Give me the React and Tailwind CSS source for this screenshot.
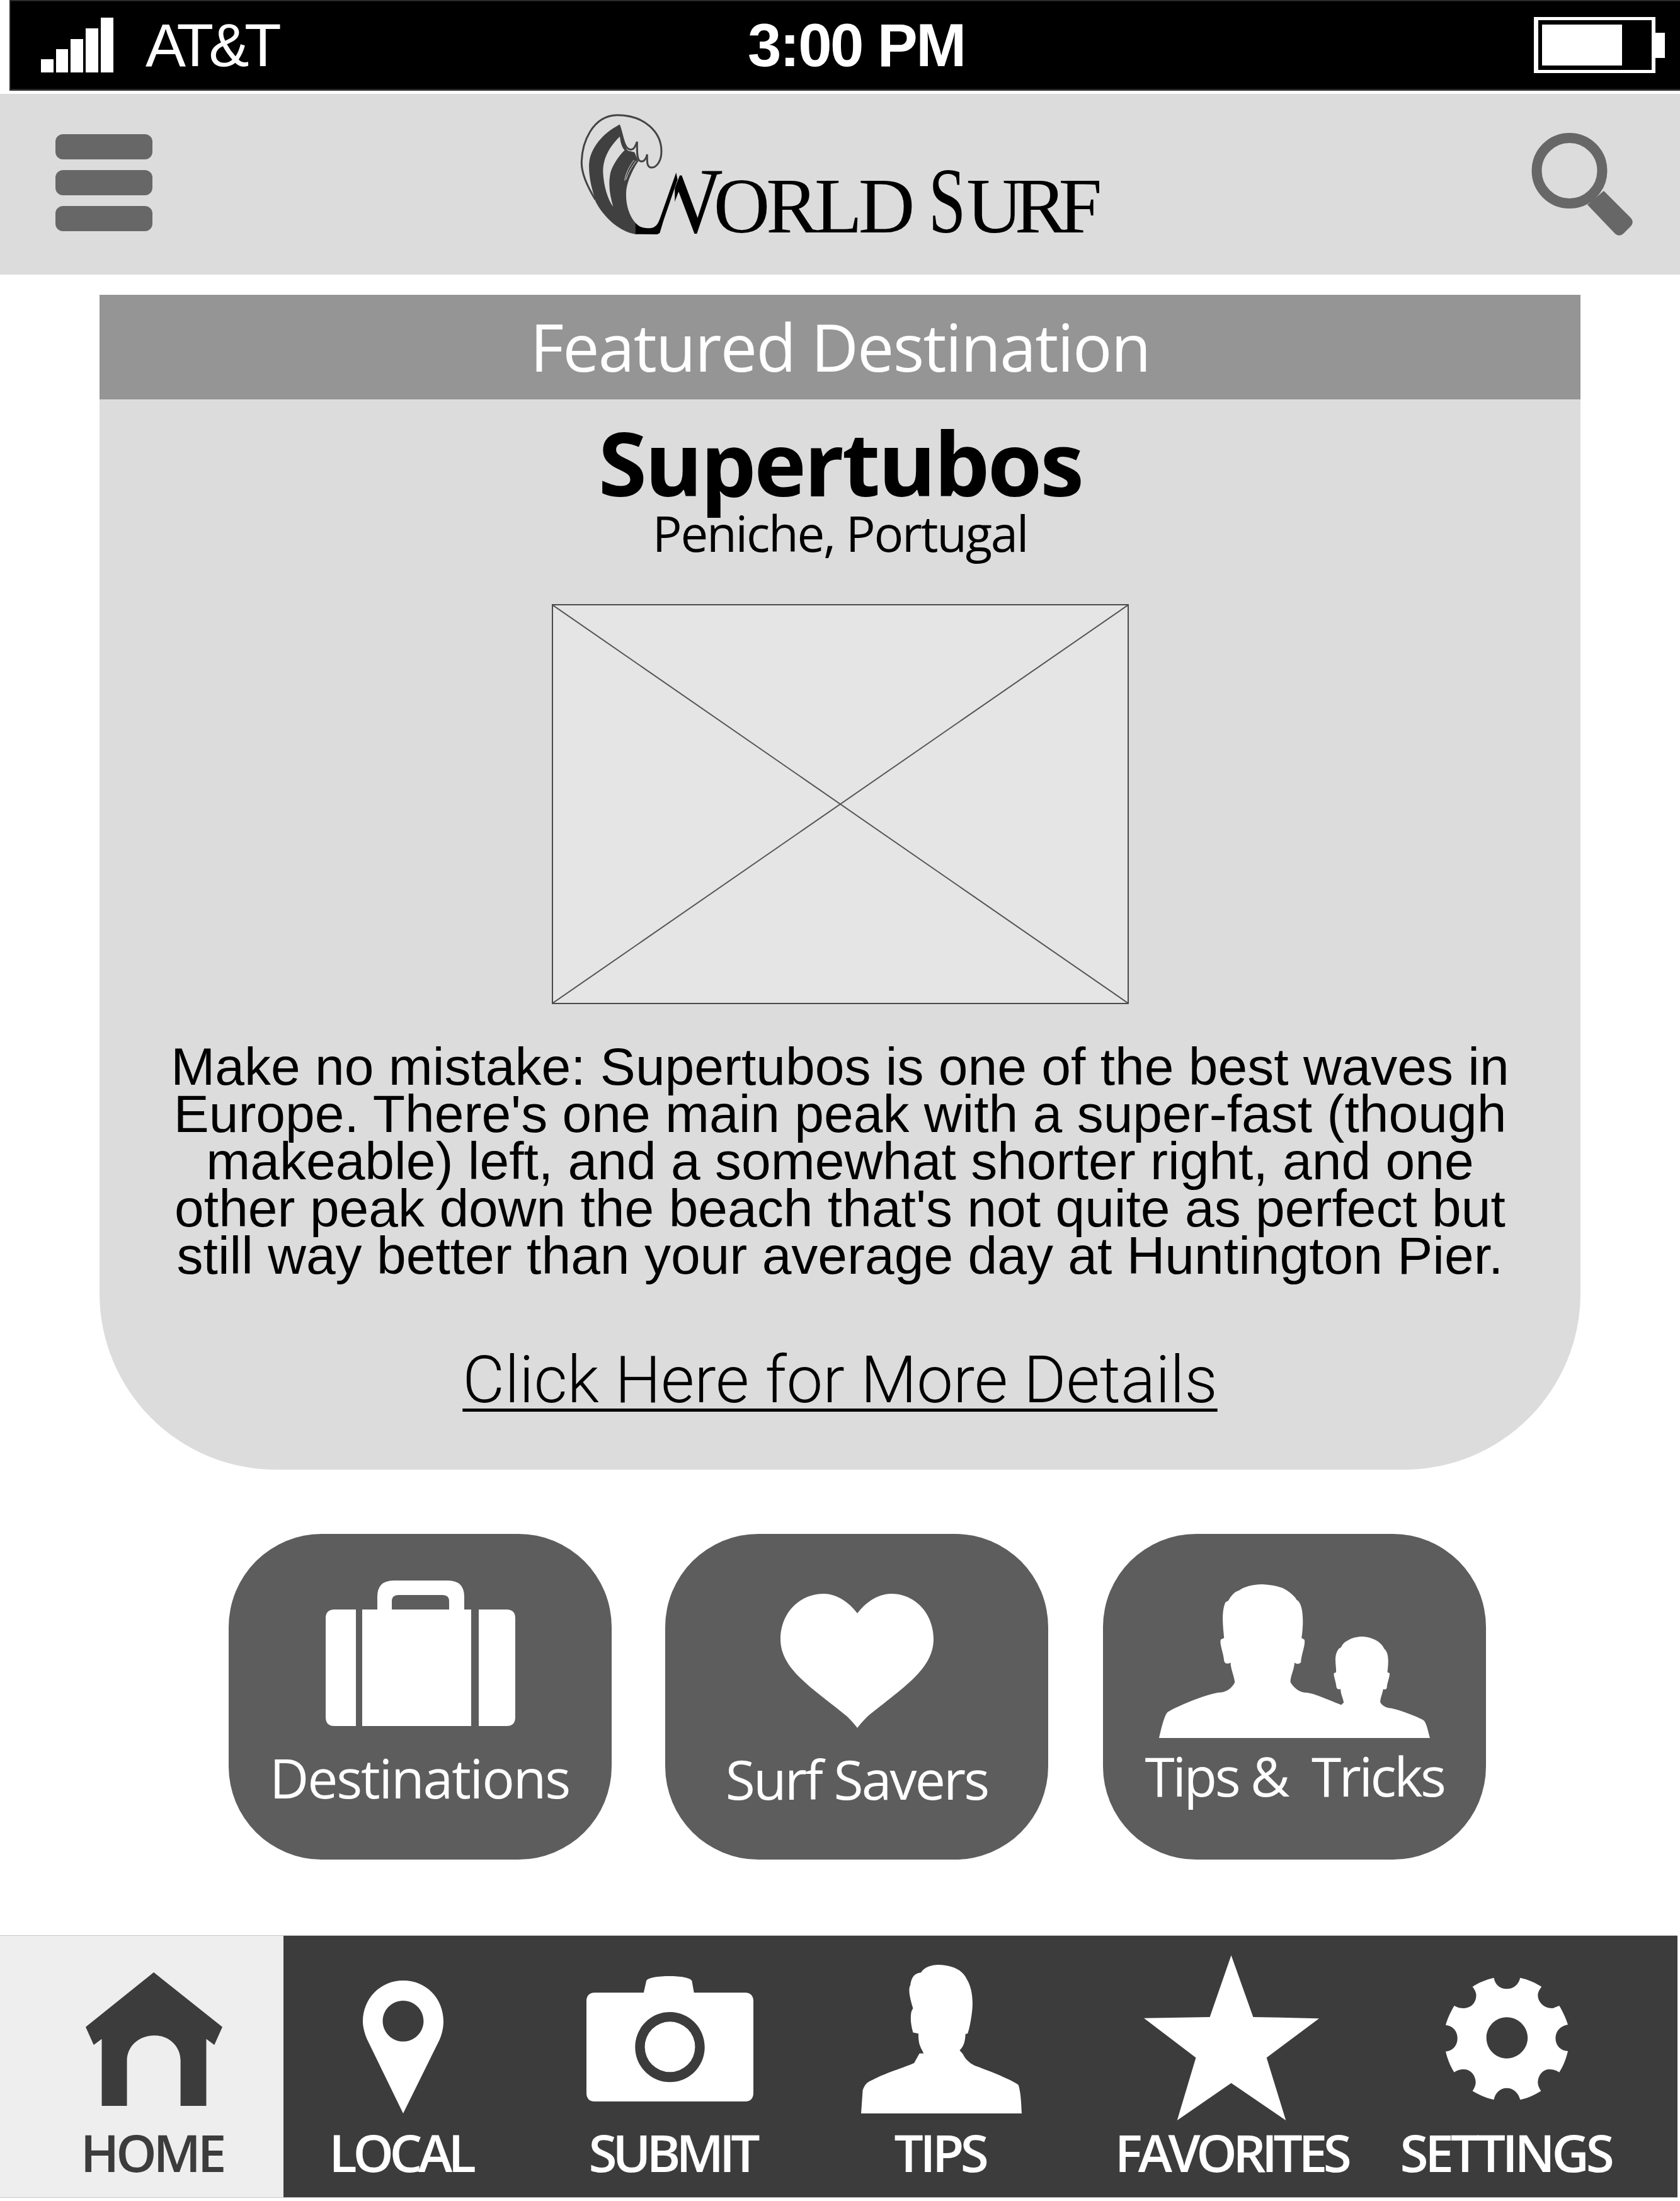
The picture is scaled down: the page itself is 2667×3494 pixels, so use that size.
import React from "react";

const myriad = "font-['Open_Sans',sans-serif]";
const helv = "font-['Liberation_Sans',Arial,sans-serif]";

function Signal() {
  return (
    <svg viewBox="65 28 115 87" className="w-[115px] h-[87px]" fill="#fff">
      <rect x="65" y="94" width="20" height="21" />
      <rect x="89" y="78" width="19" height="37" />
      <rect x="112" y="62" width="20" height="53" />
      <rect x="136" y="45" width="20" height="70" />
      <rect x="160" y="28" width="20" height="87" />
    </svg>
  );
}

function Battery() {
  return (
    <svg viewBox="2435 27 208 89" className="w-[208px] h-[89px]">
      <path fill="#fff" fillRule="evenodd" d="M2435 27H2628V116H2435ZM2442 32V111H2622V32Z" />
      <rect x="2448" y="39" width="127" height="65" fill="#fff" />
      <rect x="2628" y="52" width="15" height="40" fill="#fff" />
    </svg>
  );
}

function Search() {
  return (
    <svg viewBox="2431 211 162 164" className="w-[162px] h-[164px] mt-[62px] ml-[681px]">
      <ellipse cx="2491.5" cy="271" rx="52" ry="52" fill="none" stroke="#676767" strokeWidth="16" />
      <path fill="#676767" d="M2520 325L2546 303L2588 345Q2595 352 2589 359L2577 371Q2570 377 2563 370Z" />
    </svg>
  );
}

function Wave() {
  return (
    <svg viewBox="0 0 540 630" className="w-[180px] h-[210px] shrink-0">
      <path
        fill="none"
        stroke="#444"
        strokeWidth="9"
        d="M105,440 C62,370 38,310 40,260 C42,170 90,40 210,38 C340,38 420,120 420,210 C420,260 395,290 370,288 C350,285 352,260 352,225 C345,255 330,265 315,255 C300,240 305,190 304,165 C295,190 285,210 265,200 C240,190 235,130 218,85"
      />
      <path
        fill="#404040"
        d="M218,85 C130,130 75,210 75,280 C75,340 90,400 108,445 L95,425 C130,510 210,590 295,605 L295,550 C265,515 250,460 252,410 C252,370 275,310 310,258 L292,215 L262,208 C240,190 235,130 218,85 Z"
      />
      <path
        fill="#dcdcdc"
        d="M222,140 C170,190 140,250 142,310 C145,380 165,440 190,475 C175,420 165,370 178,310 C190,270 220,230 245,205 C230,190 225,165 222,140 Z"
      />
      <path fill="none" stroke="#dcdcdc" strokeWidth="3" d="M290,252 C268,280 250,315 245,350" />
      <path fill="none" stroke="#dcdcdc" strokeWidth="3" d="M300,256 C278,285 260,315 252,345" />
      <path
        fill="#000"
        d="M295,550 C315,575 345,580 375,575 C395,570 405,555 415,525 L490,312 L497,345 L430,540 L412,600 L400,606 L295,605 Z"
      />
    </svg>
  );
}

function Logo() {
  return (
    <div className="flex items-end w-[840px] h-[210px] mt-[21px] ml-[668px]">
      <Wave />
      <div className="flex items-baseline -ml-[83px] -mb-[22px] font-['Liberation_Serif',serif] text-black leading-[148px] text-[124px] whitespace-nowrap">
        <span className="text-[148px] [clip-path:inset(0_0_0_46%)] -mr-[14px]">W</span>
        <span className="tracking-[-6px]">ORLD</span>
        <span className="text-[148px] ml-[28px] w-[60px] scale-x-[0.72] origin-left">S</span>
        <span className="tracking-[-13px]">URF</span>
      </div>
    </div>
  );
}

function StatusBar() {
  return (
    <div className="ml-[15px] h-[144px] bg-black border-t-[2px] border-b-[3px] border-l-[2px] border-[#2b2829] flex items-center text-white">
      <div className={`w-[1170px] pl-[48px] flex items-center ${helv}`}>
        <Signal />
        <span className="ml-[51px] text-[96px] tracking-[-7.5px] leading-none">AT&amp;T</span>
      </div>
      <div className={`w-[1248px] text-[96px] font-bold tracking-[-2.6px] leading-none whitespace-nowrap ${helv}`}>3:00 PM</div>
      <Battery />
    </div>
  );
}

function Header() {
  return (
    <div className="mt-[5px] h-[287px] bg-[#dcdcdc] flex items-start pl-[88px]">
      <div className="w-[154px] mt-[64px] flex flex-col gap-[17px]">
        <div className="h-[40px] rounded-[12px] bg-[#676767]" />
        <div className="h-[40px] rounded-[12px] bg-[#676767]" />
        <div className="h-[40px] rounded-[12px] bg-[#676767]" />
      </div>
      <Logo />
      <Search />
    </div>
  );
}

function FeaturedCard() {
  return (
    <div className="mt-[32px] ml-[158px] w-[2351px] h-[1865px] bg-[#dcdcdc] rounded-b-[280px] flex flex-col items-center text-black">
      <div className={`self-stretch h-[166px] bg-[#959595] flex items-center justify-center text-white text-[104px] tracking-[-1.8px] pb-[3px] ${myriad}`}>
        Featured Destination
      </div>
      <div className={`mt-[30px] text-[140px] leading-[140px] font-bold tracking-[-3.4px] ${myriad}`}>Supertubos</div>
      <div className={`-mt-[3px] text-[78px] leading-[90px] tracking-[-2.3px] ${myriad}`}>Peniche, Portugal</div>
      <div className="mt-[68px] w-[916px] h-[635px] bg-[#e5e5e5] border-2 border-[#4a4a4a]">
        <svg viewBox="0 0 912 631" preserveAspectRatio="none" className="w-full h-full">
          <line x1="0" y1="0" x2="912" y2="631" stroke="#555" strokeWidth="2" />
          <line x1="912" y1="0" x2="0" y2="631" stroke="#555" strokeWidth="2" />
        </svg>
      </div>
      <p className={`mt-[62px] text-center text-[84px] leading-[75px] whitespace-nowrap ${helv}`}>
        Make no mistake: Supertubos is one of the best waves in
        <br />
        Europe. There's one main peak with a super-fast (though
        <br />
        makeable) left, and a somewhat shorter right, and one
        <br />
        other peak down the beach that's not quite as perfect but
        <br />
        still way better than your average day at Huntington Pier.
      </p>
      <div className="mt-[100px] text-[103px] leading-[120px] font-light font-['Roboto',sans-serif] underline decoration-[5px] underline-offset-[10px] whitespace-nowrap">
        Click Here for More Details
      </div>
    </div>
  );
}

function Suitcase() {
  return (
    <svg viewBox="516 2509 301 231" className="mt-[74px] w-[301px] h-[231px]" fill="#fff">
      <path d="M530 2555H564V2740H530Q516 2740 516 2726V2569Q516 2555 530 2555Z" />
      <path d="M759 2555H803Q817 2555 817 2569V2726Q817 2740 803 2740H759Z" />
      <path fillRule="evenodd" d="M574 2555H598V2535Q598 2509 624 2509H710Q736 2509 736 2535V2555H747V2740H574ZM621 2555H712V2542Q712 2532 702 2532H631Q621 2532 621 2542Z" />
    </svg>
  );
}

function Heart() {
  return (
    <svg viewBox="1239 2530 243 213" className="mt-[95px] w-[243px] h-[213px]" fill="#fff">
      <path d="M1361,2561 C1345,2540 1325,2530 1308,2530 C1268,2530 1239,2562 1239,2602 C1239,2650 1290,2680 1345,2725 Q1355,2735 1361,2743 Q1367,2735 1377,2725 C1432,2680 1482,2650 1482,2602 C1482,2562 1453,2530 1415,2530 C1397,2530 1377,2540 1361,2561Z" />
    </svg>
  );
}

function Persons() {
  return (
    <svg viewBox="316 265 962 682" preserveAspectRatio="none" className="mt-[80px] w-[430px] h-[244px]" fill="#fff">
      <path d="M316,947 C325,900 335,845 347,832 C380,805 490,750 530,745 C555,745 575,725 585,700 C585,680 570,640 570,612 C560,620 550,618 547,605 C545,570 530,530 535,510 L547,503 C545,470 535,390 552,345 L562,338 C570,320 580,300 600,292 C620,275 650,265 683,265 C720,268 750,275 770,292 C785,305 800,320 805,335 C830,350 830,440 822,503 L832,510 C838,530 820,580 820,610 C815,620 805,620 797,612 C797,640 780,680 783,700 C795,725 815,745 840,746 C870,750 930,785 963,800 L972,790 C970,770 960,750 961,730 C955,733 948,730 946,722 C945,700 935,670 937,660 L945,655 C945,620 935,580 955,550 L962,545 C968,530 975,520 985,515 C1000,503 1020,497 1037,497 C1060,498 1080,507 1095,520 C1105,530 1112,540 1115,550 C1135,570 1130,620 1127,655 L1135,660 C1135,680 1125,705 1125,725 C1122,733 1115,733 1112,730 C1110,750 1100,775 1102,790 C1110,805 1125,815 1140,815 C1165,820 1240,855 1257,870 C1267,885 1272,920 1278,947 Z" />
    </svg>
  );
}

function ActionButton({ icon, label, labelClass, className = "" }) {
  return (
    <div className={`w-[608px] h-[517px] bg-[#5d5d5d] rounded-[148px] flex flex-col items-center text-white ${className}`}>
      <div className="h-[337px] flex flex-col items-center">{icon}</div>
      <div className={`text-[86px] leading-[100px] font-normal whitespace-pre ${myriad} ${labelClass}`}>{label}</div>
    </div>
  );
}

function HomeIcon() {
  return (
    <svg viewBox="160 270 255 635" preserveAspectRatio="none" className="mt-[58px] w-[217px] h-[212px]" fill="#3c3c3c">
      <path d="M287,270 L415,530 L400,615 L385,587 L385,905 L337,905 L337,690 C337,620 315,570 288,570 C260,570 237,620 237,690 L237,905 L190,905 L190,587 L175,615 L160,530 Z" />
    </svg>
  );
}

function PinIcon() {
  return (
    <svg viewBox="677 310 150 632" preserveAspectRatio="none" className="mt-[71px] w-[128px] h-[211px]" fill="#fff">
      <path fillRule="evenodd" d="M752,942 L685,590 C680,560 677,530 677,505 C677,395 710,310 752,310 C795,310 827,395 827,505 C827,530 825,560 820,590 Z M752,406 C731,406 714,450 714,503 C714,556 731,600 752,600 C773,600 790,556 790,503 C790,450 773,406 752,406 Z" />
    </svg>
  );
}

function CameraIcon() {
  return (
    <svg viewBox="1095 288 312 597" preserveAspectRatio="none" className="mt-[64px] -ml-[8px] w-[265px] h-[199px]" fill="#fff">
      <path fillRule="evenodd" d="M1110,367 L1202,367 L1207,310 C1210,295 1230,288 1250,288 C1270,288 1288,295 1292,310 L1296,367 L1392,367 C1402,367 1407,385 1407,405 L1407,845 C1407,868 1402,885 1392,885 L1110,885 C1100,885 1095,868 1095,845 L1095,405 C1095,385 1100,367 1110,367Z M1251,459 C1215,459 1186,534 1186,626 C1186,718 1215,793 1251,793 C1287,793 1316,718 1316,626 C1316,534 1287,459 1251,459Z" />
      <ellipse cx="1251" cy="625" rx="47" ry="120" />
    </svg>
  );
}

function PersonIcon() {
  return (
    <svg viewBox="38 233 300 707" preserveAspectRatio="none" className="mt-[46px] w-[255px] h-[236px]" fill="#fff">
      <path d="M38,940 L41,830 C45,800 50,790 60,780 C80,750 120,720 137,700 L147,655 L155,655 C150,625 145,620 145,560 L135,555 C130,510 130,480 132,455 L135,440 C130,400 125,350 130,330 C132,300 135,275 150,270 C155,245 170,233 182,233 C210,235 228,260 235,300 C245,340 248,400 245,460 C243,500 240,540 237,560 L233,562 C232,600 230,620 222,640 L228,657 C232,680 240,700 250,712 C280,740 320,780 332,805 C337,850 337,900 338,940 Z" />
    </svg>
  );
}

function StarIcon() {
  return (
    <svg viewBox="568 190 327 795" preserveAspectRatio="none" className="mt-[31px] w-[278px] h-[265px]" fill="#fff">
      <path d="M731,190 L772,487 L895,494 L797,683 L833,985 L731,805 L630,985 L665,683 L568,493 L691,487 Z" />
    </svg>
  );
}

function GearIcon() {
  return (
    <svg viewBox="1130 295 228 585" preserveAspectRatio="none" className="mt-[66px] w-[194px] h-[195px]" fill="#fff">
      <path fillRule="evenodd" d="M1220,297 C1222,330 1232,350 1244,350 C1256,350 1266,330 1269,297 C1285,305 1298,322 1309,340 C1304,355 1302,370 1302,380 C1302,415 1315,445 1330,442 L1342,430 C1350,465 1355,495 1358,520 C1345,525 1335,550 1335,585 C1335,620 1345,645 1358,646 C1355,680 1350,715 1342,747 C1335,735 1328,732 1322,733 C1310,735 1302,765 1302,795 C1302,810 1305,825 1308,836 C1298,852 1285,870 1269,878 C1266,845 1256,822 1244,822 C1232,822 1222,845 1220,878 C1205,870 1190,852 1180,836 C1183,825 1186,810 1186,795 C1186,765 1178,735 1165,733 C1160,732 1152,735 1146,747 C1138,715 1133,680 1130,648 C1143,645 1152,620 1152,585 C1152,550 1143,525 1130,522 C1133,495 1138,465 1146,430 C1152,440 1160,443 1165,442 C1178,440 1187,415 1187,380 C1187,370 1185,355 1180,340 C1190,322 1205,305 1220,297 Z M1244,485 C1223,485 1206,529 1206,583 C1206,637 1223,681 1244,681 C1265,681 1283,637 1283,583 C1283,529 1265,485 1244,485 Z" />
    </svg>
  );
}

function NavItem({ icon, label, className, labelClass }) {
  return (
    <div className={`flex flex-col items-center shrink-0 ${className}`}>
      <div className="h-[293px] flex flex-col items-center">{icon}</div>
      <div className={`text-[82px] leading-[100px] font-semibold whitespace-nowrap ${myriad} ${labelClass}`}>{label}</div>
    </div>
  );
}

export default function App() {
  return (
    <div className="w-[2667px] h-[3494px] bg-white overflow-hidden">
      <StatusBar />
      <Header />
      <FeaturedCard />
      <div className="mt-[102px] pl-[363px] flex gap-[85px]">
        <ActionButton icon={<Suitcase />} label="Destinations" labelClass="tracking-[-2.2px] -ml-[2px]" />
        <ActionButton icon={<Heart />} label="Surf Savers" labelClass="tracking-[-2.9px] mt-[2px]" />
        <ActionButton className="ml-[2px]" icon={<Persons />} label={"Tips &\u00a0 Tricks"} labelClass="tracking-[-3.5px] -mt-[3px]" />
      </div>
      <div className="mt-[120px] w-[2663px] h-[417px] border-y border-[#c8c8c8] flex">
        <NavItem className="w-[450px] pl-[38px] bg-[#eeeeee] text-[#3c3c3c]" labelClass="tracking-[-5.3px] -ml-[6px]" icon={<HomeIcon />} label="HOME" />
        <div className="flex-1 bg-[#3c3c3c] text-white flex">
          <NavItem className="w-[380px]" labelClass="tracking-[-6.5px] -ml-[8px]" icon={<PinIcon />} label="LOCAL" />
          <NavItem className="w-[474px]" labelClass="tracking-[-7px]" icon={<CameraIcon />} label="SUBMIT" />
          <NavItem className="w-[380px]" labelClass="tracking-[-5.5px] -ml-[4px]" icon={<PersonIcon />} label="TIPS" />
          <NavItem className="w-[541px]" labelClass="tracking-[-6.5px]" icon={<StarIcon />} label="FAVORITES" />
          <NavItem className="w-[334px]" labelClass="tracking-[-5.3px] -ml-[4px]" icon={<GearIcon />} label="SETTINGS" />
        </div>
      </div>
    </div>
  );
}
